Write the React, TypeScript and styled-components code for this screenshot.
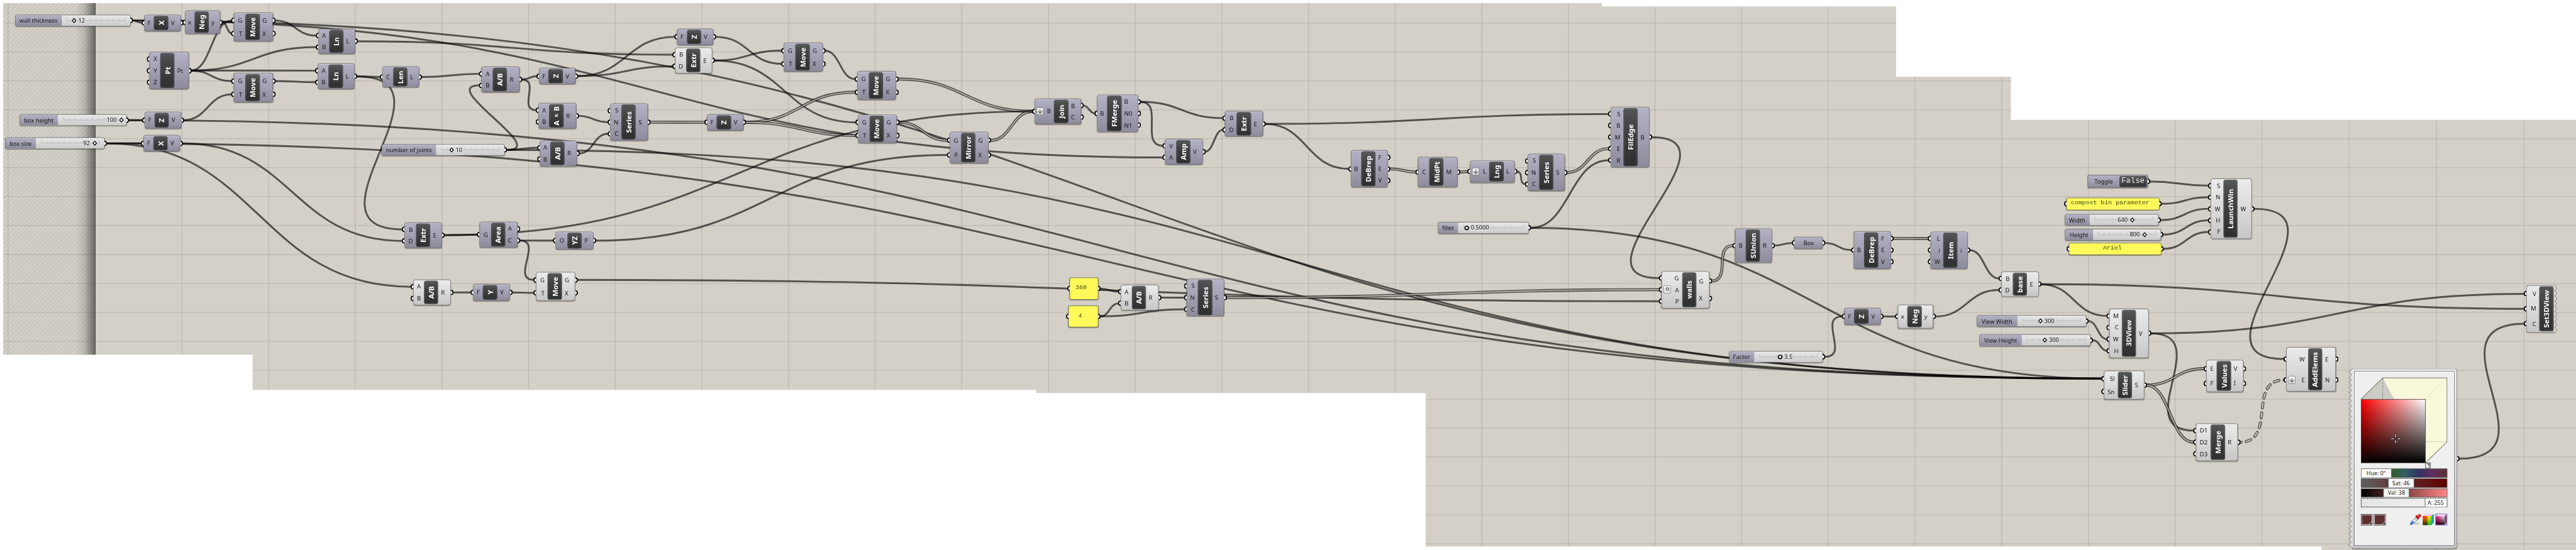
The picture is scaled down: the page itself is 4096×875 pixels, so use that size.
import React from "react";
import styled, { createGlobalStyle, css } from "styled-components";
import { ArrowDown } from "lucide-react";

const GlobalStyle = createGlobalStyle`
  html, body { margin: 0; padding: 0; background: #fff; overflow: hidden; }
  *, *::before, *::after { box-sizing: border-box; }
`;

const SANS = `"Noto Sans", "Open Sans", sans-serif`;
const MONO = `"Liberation Mono", monospace`;
const BOARD_W = 6445;
const BOARD_H = 1377;
const SCALE = 4096 / BOARD_W;

type Tone = "violet" | "light";

/* ---------- canvas ---------- */

const Viewport = styled.main`
  width: 4096px;
  height: 875px;
  overflow: hidden;
  background: #fff;
`;

const Board = styled.div`
  position: relative;
  width: ${BOARD_W}px;
  height: ${BOARD_H}px;
  transform: scale(${SCALE});
  transform-origin: 0 0;
  font-family: ${SANS};
  color: #131313;
`;

const Sheet = styled.div`
  position: absolute;
  inset: 0;
  background: #d4d0c8;
  clip-path: polygon(
    8px 8px, 4008px 8px, 4008px 16px, 4744px 16px, 4744px 192px, 5031px 192px, 5031px 300px,
    6445px 300px, 6445px 1377px, 5808px 1377px, 5808px 1368px, 3567px 1368px, 3567px 984px,
    2592px 984px, 2592px 976px, 632px 976px, 632px 888px, 8px 888px
  );
`;

const Margin = styled.div`
  width: 238.5px;
  height: 100%;
  border-right: 2px solid #3a3936;
  background:
    linear-gradient(to right, transparent 190px, rgba(0, 0, 0, 0.12) 212px, rgba(0, 0, 0, 0.5) 238px),
    repeating-linear-gradient(135deg, #d4d0c8 0 4px, #c8c4bb 4.8px 7.2px, #d4d0c8 8px);
`;

const Layer = styled.svg`
  position: absolute;
  inset: 0;
  display: block;
`;

/* ---------- shared parts ---------- */

const toneFill = {
  violet: css`
    background: linear-gradient(#b3b1c3, #a3a1b3 45%, #8d8a9b);
    border-color: #4b4a52;
  `,
  light: css`
    background: linear-gradient(#ebebeb, #dadada 50%, #c6c6c6);
    border-color: #585858;
  `,
};

const Placed = styled.div<{ $x: number; $y: number; $w: number; $h: number }>`
  position: absolute;
  left: ${(p) => p.$x}px;
  top: ${(p) => p.$y}px;
  width: ${(p) => p.$w}px;
  height: ${(p) => p.$h}px;
`;

const Grip = styled.i<{ $side: "in" | "out" }>`
  position: absolute;
  top: 50%;
  width: 7px;
  height: 14px;
  margin-top: -7px;
  background: #fff;
  border: 3px solid #000;
  ${(p) =>
    p.$side === "in"
      ? css`
          left: -7px;
          border-right: 0;
          border-radius: 7px 0 0 7px;
        `
      : css`
          right: -7px;
          border-left: 0;
          border-radius: 0 7px 7px 0;
        `}
`;

/* ---------- component node ---------- */

const NodeBox = styled(Placed)<{ $cols: string }>`
  display: grid;
  grid-template-columns: ${(p) => p.$cols};
  padding: 3px 0;
`;

const NodeSkin = styled.div<{ $tone: Tone; $jagged?: boolean }>`
  position: absolute;
  inset: 0;
  border: 1.6px solid;
  border-radius: 6px;
  ${(p) => toneFill[p.$tone]}
  box-shadow: inset 0 1.5px 0 rgba(255, 255, 255, 0.55), inset 1px 0 0 rgba(255, 255, 255, 0.25),
    0 1px 2px rgba(0, 0, 0, 0.35);
  ${(p) => p.$jagged && css`border-right: 0; border-radius: 6px 0 0 6px;`}
`;

const Column = styled.div`
  position: relative;
  display: flex;
  flex-direction: column;
  min-width: 0;
`;

const Param = styled.div<{ $side: "in" | "out" }>`
  position: relative;
  flex: 1;
  display: flex;
  align-items: center;
  justify-content: ${(p) => (p.$side === "in" ? "flex-end" : "flex-start")};
  gap: 8px;
  padding: ${(p) => (p.$side === "in" ? "0 8px 0 0" : "0 0 0 7px")};
  font-size: 15px;
  line-height: 1;
  white-space: nowrap;
`;

const Title = styled.div`
  position: relative;
  display: flex;
  align-items: center;
  justify-content: center;
  border: 1.6px solid #060606;
  border-radius: 5px;
  background: linear-gradient(#555, #444 30%, #2f2f2f);
  box-shadow: inset 0 0 0 1px rgba(255, 255, 255, 0.22);
  color: #fff;
`;

const TitleText = styled.span`
  writing-mode: vertical-rl;
  transform: rotate(180deg);
  font-size: 18px;
  font-weight: 700;
  line-height: 1;
  white-space: nowrap;
`;

const Modifier = styled.span`
  width: 18.5px;
  height: 19.5px;
  margin-right: auto;
  margin-left: 4.5px;
  display: flex;
  align-items: center;
  justify-content: center;
  border: 1.3px solid #6a6a6a;
  border-radius: 3px;
  background: linear-gradient(#fff, #d8d8d8);
  color: #555;
`;

interface Comp {
  x0: number; x1: number; y0: number; y1: number; t: number;
  name: string; ins: string[]; outs: string[];
  tone?: Tone; mod?: { row: number; kind: "down" | "dot" }; jagged?: boolean;
}

const c = (
  x0: number, x1: number, y0: number, y1: number, t: number,
  name: string, ins: string, outs: string, extra: Partial<Comp> = {}
): Comp => ({ x0, x1, y0, y1, t, name, ins: ins.split(" ").filter(Boolean), outs: outs.split(" ").filter(Boolean), ...extra });

const L = { tone: "light" as Tone };

const comps: Record<string, Comp> = {
  x1: c(361.2, 452.7, 36.7, 77.7, 385.3, "X", "F", "V"),
  neg1: c(462.5, 551, 26, 85, 486.6, "Neg", "x", "y"),
  move1: c(585.3, 682.6, 32, 103.3, 614.3, "Move", "G T", "G X"),
  pt: c(373.7, 472.8, 130, 223.3, 401, "Pt", "X Y Z", "Pt"),
  move2: c(585.3, 682.6, 183.3, 255.7, 614.3, "Move", "G T", "G X"),
  z1: c(362, 454, 280.3, 321.7, 386.6, "Z", "F", "V"),
  x2: c(359.4, 451, 338.3, 379.3, 384, "X", "F", "V"),
  ln1: c(796.5, 888.5, 71.7, 135.3, 823.8, "Ln", "A B", "L"),
  ln2: c(795.2, 886.7, 159.3, 223.3, 822.4, "Ln", "A B", "L"),
  len: c(956.8, 1048.8, 166.3, 219.3, 984, "Len", "C", "L"),
  div1: c(1205.4, 1300, 167.3, 231, 1233, "A/B", "A B", "R"),
  z2: c(1348.8, 1440.4, 170, 211, 1372.5, "Z", "F", "V"),
  mul: c(1347.4, 1441.7, 258.3, 322, 1374.3, "A×B", "A B", "R"),
  div2: c(1350.5, 1444, 352.3, 415.7, 1377, "A/B", "A B", "R"),
  series1: c(1526.5, 1620.7, 259.3, 352.3, 1555, "Series", "S N C", "S"),
  z3: c(1694, 1785.4, 71.7, 112.7, 1718.5, "Z", "F", "V"),
  extr1: c(1688.6, 1782.3, 119.3, 183.7, 1717, "Extr", "B D", "E", L),
  z4: c(1769.4, 1860.4, 285.7, 326.7, 1793.5, "Z", "F", "V"),
  move3: c(1961.3, 2058.7, 107.3, 179.3, 1990.4, "Move", "G T", "G X"),
  move4: c(2144.7, 2242, 178.3, 250.3, 2173.8, "Move", "G T", "G X"),
  move5: c(2146.6, 2243.6, 287, 358.3, 2175.7, "Move", "G T", "G X"),
  mirror: c(2376, 2473.3, 330, 409, 2405, "Mirror", "G P", "G X"),
  join: c(2589, 2705, 246.7, 310.7, 2637.2, "Join", "B", "B C", { mod: { row: 0, kind: "down" } }),
  fmerge: c(2744.8, 2848, 237.3, 331, 2770.3, "FMerge", "B", "B N0 N1"),
  amp: c(2915.4, 3009.6, 347.7, 411.7, 2942.6, "Amp", "V A", "V"),
  extr2: c(3065.4, 3159.6, 278, 342.3, 3094.4, "Extr", "B D", "E"),
  debrep1: c(3379.5, 3472.2, 376.3, 469.3, 3405.8, "DeBrep", "B", "F E V"),
  midpt: c(3548.4, 3647.2, 393.3, 468, 3575.9, "MidPt", "C", "M"),
  lng: c(3678.4, 3789.8, 402.3, 456.7, 3726.2, "Lng", "L", "L", { mod: { row: 0, kind: "down" } }),
  series2: c(3821.6, 3915.4, 385, 478.3, 3850.7, "Series", "S N C", "S"),
  filedge: c(4029.5, 4126.6, 268, 418.7, 4061.9, "FilEdge", "S B M E R", "B"),
  extr3: c(1012, 1106.4, 556.7, 620.7, 1041, "Extr", "B D", "E"),
  area: c(1199.7, 1295.4, 555.3, 619.7, 1228.6, "Area", "G", "A C"),
  yz: c(1390.3, 1485.2, 580, 624.7, 1419.6, "YZ", "O", "P"),
  div3: c(1033.6, 1128, 700.3, 764.3, 1061, "A/B", "A B", "R", L),
  y1: c(1183.5, 1275.6, 711.3, 752.7, 1208.4, "Y", "F", "V"),
  move6: c(1341.3, 1439, 681.3, 752.7, 1370.5, "Move", "G T", "G X", L),
  div4: c(2804, 2898.5, 712.7, 777, 2831.5, "A/B", "A B", "R", L),
  series3: c(2969, 3063.4, 698.3, 791.7, 2997.2, "Series", "S N C", "S"),
  walls: c(4157, 4276.8, 678.7, 771.7, 4208.5, "walls", "G A P", "G X", { tone: "light", mod: { row: 1, kind: "dot" } }),
  sunion: c(4341.3, 4434.3, 571.7, 657.7, 4368, "SUnion", "B", "R"),
  debrep2: c(4638, 4730.5, 579.3, 672.7, 4664, "DeBrep", "B", "F E V"),
  z5: c(4614.7, 4706.3, 771.3, 812.7, 4639.4, "Z", "F", "V"),
  neg2: c(4747.5, 4836.6, 763, 821.7, 4772.2, "Neg", "x", "y", L),
  item: c(4830.4, 4923.4, 579.7, 672.7, 4862, "Item", "L i W", "i"),
  base: c(5006.7, 5100.8, 679.7, 743.3, 5036, "base", "B D", "E", L),
  launch: c(5530.8, 5634, 447.3, 598, 5563, "LaunchWin", "S N W H F", "W", L),
  view3d: c(5277, 5376.3, 773.3, 895.7, 5308.6, "3DView", "M C W H", "V", L),
  slider: c(5263.8, 5364.7, 928.3, 999.7, 5298.7, "Slider", "Sl Sn", "S", L),
  values: c(5520, 5613.4, 901.3, 981.3, 5546.4, "Values", "E F", "V I", L),
  merge: c(5494, 5598.7, 1060.3, 1153.7, 5531.3, "Merge", "D1 D2 D3", "R", L),
  addelems: c(5720, 5843.8, 869.3, 980.3, 5774.6, "AddElems", "W E", "E N", { tone: "light", mod: { row: 1, kind: "down" } }),
  set3d: c(6321, 6392, 713.8, 832, 6353.4, "Set3DView", "V M C", "", { tone: "light", jagged: true }),
};

const zigzag = (x: number, y0: number, y1: number, step: number, depth: number) => {
  const pts: string[] = [];
  const n = Math.round((y1 - y0) / step);
  const s = (y1 - y0) / n;
  for (let i = 0; i <= n; i++) {
    pts.push(`${x},${y0 + i * s}`);
    if (i < n) pts.push(`${x + depth},${y0 + (i + 0.5) * s}`);
  }
  return pts.join(" ");
};

const TornEdge = styled.svg<{ $side: "left" | "right" }>`
  position: absolute;
  top: 0;
  ${(p) => (p.$side === "left" ? "left: -7px;" : "right: -6px;")}
  overflow: visible;
`;

function Component({ d }: { d: Comp }) {
  const tone = d.tone ?? "violet";
  const h = d.y1 - d.y0;
  const cols = `${d.t - d.x0}px 35.4px 1fr`;
  return (
    <NodeBox $x={d.x0} $y={d.y0} $w={d.x1 - d.x0} $h={h} $cols={cols}>
      <NodeSkin $tone={tone} $jagged={d.jagged} />
      {d.jagged && (
        <TornEdge $side="right" width="8" height={h}>
          <polygon points={`0,0.8 ${zigzag(2, 0.8, h - 0.8, 13, 5)} 0,${h - 0.8}`} fill="#dcdcdc" />
          <polyline points={zigzag(2, 0.8, h - 0.8, 13, 5)} fill="none" stroke="#6a6a6a" strokeWidth="1.4" />
        </TornEdge>
      )}
      <Column>
        {d.ins.map((s, i) => (
          <Param key={i} $side="in">
            <Grip $side="in" />
            {d.mod?.row === i && (
              <Modifier>
                {d.mod.kind === "down" ? (
                  <ArrowDown size={17} strokeWidth={2.6} />
                ) : (
                  <svg width="12" height="14" viewBox="0 0 12 14">
                    <circle cx="7" cy="5.5" r="3.4" fill="#ddd" stroke="#666" strokeWidth="2" />
                  </svg>
                )}
              </Modifier>
            )}
            {s}
          </Param>
        ))}
      </Column>
      <Title>
        <TitleText>{d.name}</TitleText>
      </Title>
      <Column>
        {d.outs.map((s, i) => (
          <Param key={i} $side="out">
            <Grip $side="out" />
            {s}
          </Param>
        ))}
      </Column>
    </NodeBox>
  );
}

/* ---------- number sliders ---------- */

interface Num {
  x0: number; x1: number; y: number; split: number; knob: number;
  label: string; value: string; side: "left" | "right"; round?: boolean;
}

const n = (x0: number, x1: number, y: number, split: number, knob: number, label: string, value: string, side: "left" | "right", round = false): Num =>
  ({ x0, x1, y, split, knob, label, value, side, round });

const sliders: Record<string, Num> = {
  wall: n(38.4, 326.8, 36.7, 153, 184.4, "wall thickness", "12", "right"),
  height: n(49.6, 317.4, 286.3, 143.8, 302.7, "box height", "100", "left"),
  size: n(13.4, 262.5, 344.3, 88.8, 236, "box size", "92", "left"),
  joints: n(955.4, 1263.5, 360.7, 1089.8, 1128.7, "number of joints", "10", "right"),
  fillet: n(3597.8, 3825, 555.7, 3647, 3668.6, "fillet", "0.5000", "right", true),
  factor: n(4326, 4561, 878.7, 4388, 4452.8, "Factor", "3.5", "right", true),
  winW: n(5166, 5400.5, 536.3, 5227, 5334, "Width", "640", "left"),
  winH: n(5167.4, 5407.3, 572.7, 5234.6, 5364.3, "Height", "800", "left"),
  viewW: n(4945.8, 5219.6, 789.3, 5045.7, 5103.7, "View Width", "300", "right"),
  viewH: n(4952.7, 5231, 837, 5057, 5115, "View Height", "300", "right"),
};

const SLIDER_H = 29.2;

const SliderBox = styled(Placed)`
  display: flex;
  border: 1.6px solid #4b4a50;
  border-radius: 5px;
  background: linear-gradient(#e9e9e9, #d9d9d9 50%, #cbcbcb);
  box-shadow: 0 1px 2px rgba(0, 0, 0, 0.35), inset 0 1.5px 0 rgba(255, 255, 255, 0.7);
`;

const SliderLabel = styled.div<{ $w: number }>`
  width: ${(p) => p.$w}px;
  display: flex;
  align-items: center;
  justify-content: center;
  border-right: 1.6px solid #3c3c42;
  border-radius: 4px 0 0 4px;
  background: linear-gradient(#b3b1c3, #a3a1b3 45%, #8d8a9b);
  font-size: 14.7px;
  line-height: 1;
  white-space: nowrap;
`;

const Track = styled.div`
  position: relative;
  flex: 1;
`;

const TickSvg = styled.svg`
  position: absolute;
  left: 0;
  top: 0;
  overflow: visible;
`;

const Value = styled.span<{ $edge: number; $side: "left" | "right" }>`
  position: absolute;
  top: 5px;
  ${(p) => (p.$side === "right" ? "left" : "right")}: ${(p) => p.$edge}px;
  padding: 0 1px;
  background: #dadada;
  font-size: 14.4px;
  line-height: 16px;
`;

function NumberSlider({ d }: { d: Num }) {
  const tw = d.x1 - d.split;
  const k = d.knob - d.split;
  const a = 13.5;
  const b = tw - 15;
  return (
    <SliderBox $x={d.x0} $y={d.y} $w={d.x1 - d.x0} $h={SLIDER_H}>
      <SliderLabel $w={d.split - d.x0}>{d.label}</SliderLabel>
      <Track>
        <TickSvg width={tw} height="26">
          <g stroke="#b3b3b3" strokeWidth="1.2">
            <line x1={a} x2={b} y1="13.6" y2="13.6" />
            {Array.from({ length: 11 }, (_, i) => {
              const x = a + ((b - a) * i) / 10;
              return <line key={i} x1={x} x2={x} y1={i % 5 === 0 ? 5.5 : 8.5} y2="13.6" />;
            })}
          </g>
        </TickSvg>
        <Value $side={d.side} $edge={d.side === "right" ? k + 9.5 : tw - k + 9}>{d.value}</Value>
        <TickSvg width={tw} height="26">
          {d.round ? (
            <circle cx={k} cy="13.4" r="4.4" fill="#fff" stroke="#000" strokeWidth="2.6" />
          ) : (
            <path d={`M${k} 8.4l4.4 5-4.4 5-4.4-5z`} fill="#fff" stroke="#000" strokeWidth="2" />
          )}
        </TickSvg>
        <Grip $side="out" />
      </Track>
    </SliderBox>
  );
}

/* ---------- panels, toggle, plain parameter ---------- */

interface PanelData { x0: number; x1: number; y0: number; y1: number; text: string; shift: number }

const panels: Record<string, PanelData> = {
  p360: { x0: 2675.8, x1: 2748, y0: 695.3, y1: 749.7, text: "360", shift: 7 },
  p4: { x0: 2672.7, x1: 2748, y0: 764.7, y1: 819, text: "4", shift: 8 },
  title: { x0: 5170, x1: 5402.8, y0: 494.7, y1: 525.7, text: "compost bin parameter", shift: 7 },
  font: { x0: 5176, x1: 5408, y0: 607.7, y1: 638, text: "Ariel", shift: 7 },
};

const PanelBox = styled(Placed)<{ $shift: number }>`
  display: flex;
  align-items: center;
  justify-content: center;
  padding: 0 ${(p) => 2 * p.$shift}px 3px 0;
  border: 1.6px solid #5d5b33;
  border-radius: 5px;
  background: #fffa5a;
  box-shadow: 0 1px 2px rgba(0, 0, 0, 0.35);
  color: #3c4a10;
  font-family: ${MONO};
  font-size: 15.6px;
  line-height: 1;
  white-space: nowrap;
`;

const ToggleBox = styled(Placed)`
  display: flex;
  align-items: center;
  border: 1.6px solid;
  border-radius: 5px;
  padding: 0 2px 0 0;
  ${toneFill.violet}
  box-shadow: 0 1px 2px rgba(0, 0, 0, 0.35);
`;

const ToggleLabel = styled.span`
  flex: 1;
  text-align: center;
  font-size: 14.7px;
  line-height: 1;
`;

const ToggleState = styled.span`
  width: 68px;
  height: 27px;
  display: flex;
  align-items: flex-start;
  justify-content: center;
  border: 1.6px solid #0a0a0a;
  border-radius: 4px;
  background: linear-gradient(#555, #333);
  box-shadow: inset 0 0 0 1px rgba(255, 255, 255, 0.25);
  color: #f0f0f0;
  font-family: ${MONO};
  font-size: 19.2px;
  line-height: 22px;
`;

const ParamBox = styled(Placed)`
  display: flex;
  align-items: center;
  justify-content: center;
  border: 1.6px solid;
  border-radius: 5px;
  ${toneFill.violet}
  box-shadow: inset 0 1.5px 0 rgba(255, 255, 255, 0.4), 0 1px 2px rgba(0, 0, 0, 0.35);
  font-size: 14.7px;
  line-height: 1;
`;

/* ---------- colour picker ---------- */

const PickerBox = styled(Placed)`
  padding: 5px 5px 6px;
  border: 1.6px solid #666;
  border-left: 0;
  border-radius: 0 6px 6px 0;
  background: linear-gradient(#f0f0f0, #c4c4c8);
  box-shadow: 0 1px 2px rgba(0, 0, 0, 0.4);
`;

const PickerBody = styled.div`
  width: 100%;
  height: 100%;
  padding: 15px 17px 0 15.5px;
  border: 1.6px solid #444;
  background: #efefef;
  box-shadow: inset 0 0 0 1.6px #fff;
  display: flex;
  flex-direction: column;
`;

const CubeArea = styled.div`
  position: relative;
  width: 216px;
  height: 228px;
`;

const ShadeSquare = styled.div`
  position: absolute;
  left: 0;
  top: 53.5px;
  width: 162px;
  height: 160px;
  border: 1.4px solid #1a0000;
  background: linear-gradient(to top, #000, transparent), linear-gradient(to right, #f00, #fff);
`;

const Bars = styled.div`
  display: flex;
  flex-direction: column;
  gap: 2.2px;
`;

const Bar = styled.div<{ $fill: string; $lead: number }>`
  height: 22.5px;
  width: 216px;
  display: flex;
  padding-left: ${(p) => p.$lead}px;
  border: 1.5px solid #151515;
  background: ${(p) => p.$fill};
`;

const BarValue = styled.span<{ $w: number; $at: "start" | "mid" | "end" }>`
  width: ${(p) => p.$w}px;
  display: flex;
  align-items: center;
  justify-content: center;
  background: #fff;
  border: solid #151515;
  border-width: ${(p) => ({ start: "0 1.5px 0 0", mid: "0 1.5px", end: "0 0 0 1.5px" }[p.$at])};
  font-size: 14px;
  line-height: 1;
  white-space: nowrap;
`;

const Tools = styled.div`
  display: flex;
  align-items: center;
  margin-top: 16.5px;
  gap: 3px;
  width: 216px;
`;

const Gap = styled.span`
  flex: 1;
`;

const Swatch = styled.span`
  width: 29.5px;
  height: 28.5px;
  border: 1.6px solid #050505;
  background: linear-gradient(135deg, #5e2e2f 80%, #fff 80% 85%, #000 85%);
  box-shadow: inset 0 0 0 1.4px #fff;
`;

function ColourPicker() {
  return (
    <PickerBox $x={5885} $y={923.4} $w={262} $h={449.6}>
      <TornEdge $side="left" width="8" height="449">
        <polygon points={`8,0.8 ${zigzag(5, 0.8, 446, 13, -5)} 8,446`} fill="#e2e2e2" />
        <polyline points={`8,0 ${zigzag(5, 0.8, 446, 13, -5)} 8,447`} fill="none" stroke="#6a6a6a" strokeWidth="1.4" />
      </TornEdge>
      <PickerBody>
        <CubeArea>
          <svg width="216" height="228" viewBox="0 0 216 228">
            <polygon points="0.5,54 54.5,0.7 215.5,0.7 215.5,161 162,213 162,54" fill="#f9f8db" />
            <polygon points="0.5,54 54.5,0.7 83,54" fill="#cdcdc5" />
            <line x1="162" y1="54" x2="215" y2="1" stroke="#d8d7c0" strokeWidth="1.2" />
            <line x1="54.5" y1="2" x2="54.5" y2="54" stroke="#777" strokeWidth="1.6" strokeDasharray="3 2.6" />
            <line x1="162" y1="160.5" x2="215" y2="160.5" stroke="#b4b39d" strokeWidth="1.6" strokeDasharray="3 2.6" />
            <polyline points="0.5,54 54.5,0.7 215.5,0.7 215.5,161 162,213" fill="none" stroke="#222" strokeWidth="1.3" />
            <rect x="161.5" y="213.5" width="12.5" height="12.5" fill="#fff" stroke="#222" strokeWidth="1.2" />
            <polygon points="162,214 174,214 174,226" fill="#888" />
          </svg>
          <ShadeSquare>
            <svg width="159" height="157" viewBox="0 0 159 157">
              <g stroke="#111" strokeWidth="4.2" strokeLinecap="round">
                <path d="M86 88v5M86 103v5M75.5 98h5M92 98h5" />
              </g>
              <g stroke="#fff" strokeWidth="2" strokeLinecap="round">
                <path d="M86 88v5M86 103v5M75.5 98h5M92 98h5" />
              </g>
            </svg>
          </ShadeSquare>
        </CubeArea>
        <Bars>
          <Bar $lead={0} $fill="linear-gradient(to right,#5f2f2f,#5f5f30 20%,#2f5f33 38%,#305f62 50%,#333363 67%,#5f3062 82%,#602f33)">
            <BarValue $w={76} $at="start">Hue: 0°</BarValue>
          </Bar>
          <Bar $lead={67} $fill="linear-gradient(to right,#606060,#603636 40%,#600000)">
            <BarValue $w={65} $at="mid">Sat: 46</BarValue>
          </Bar>
          <Bar $lead={55.5} $fill="linear-gradient(to right,#000,#602f2f 38%,#ff8585)">
            <BarValue $w={65} $at="mid">Val: 38</BarValue>
          </Bar>
          <Bar $lead={159} $fill="linear-gradient(to right,rgba(240,240,240,.1),#efefef 75%), repeating-conic-gradient(#c8c8c8 0 25%,#fff 0 50%) 0 0/8px 8px">
            <BarValue $w={54} $at="end">A: 255</BarValue>
          </Bar>
        </Bars>
        <Tools>
          <Swatch />
          <Swatch />
          <Gap />
          <svg width="29" height="29" viewBox="0 0 29 29">
            <defs>
              <linearGradient id="tube" x1="0" y1="1" x2="1" y2="0">
                <stop offset="0" stopColor="#0a50e0" />
                <stop offset="0.4" stopColor="#58a0ff" />
                <stop offset="0.5" stopColor="#f2f6fa" />
                <stop offset="1" stopColor="#9aa6b2" />
              </linearGradient>
            </defs>
            <ellipse cx="17" cy="25" rx="9" ry="2.5" fill="#c9c9c9" />
            <path d="M1 28l3-8 12-11 5 5-12 11z" fill="url(#tube)" stroke="#445" strokeWidth="1" />
            <path d="M14 7l7 8 2-3 5-6c1-3-1-6-5-5l-5 3-2 0z" fill="#cc2418" />
            <path d="M20 5l4-3" stroke="#ff9a88" strokeWidth="1.6" />
          </svg>
          <svg width="29" height="29" viewBox="0 0 29 29">
            <defs>
              <linearGradient id="rg" x1="0" y1="0" x2="1" y2="1">
                <stop offset="0" stopColor="#ff1010" />
                <stop offset="0.5" stopColor="#b58a00" />
                <stop offset="1" stopColor="#00a010" />
              </linearGradient>
              <linearGradient id="yt" x1="0" y1="0" x2="0" y2="1">
                <stop offset="0" stopColor="#ffff20" />
                <stop offset="1" stopColor="#10c030" />
              </linearGradient>
              <linearGradient id="dk" x1="0" y1="0" x2="0" y2="1">
                <stop offset="0.3" stopColor="#000" stopOpacity="0" />
                <stop offset="1" stopColor="#000" stopOpacity="0.75" />
              </linearGradient>
            </defs>
            <polygon points="1,6 6,0.5 28.5,0.5 22,6" fill="#f7c8e6" />
            <polygon points="22,6 28.5,0.5 28.5,22 22,28.5" fill="#18a8a8" />
            <rect x="0.5" y="6" width="21.5" height="22.5" fill="url(#rg)" />
            <rect x="12" y="6" width="10" height="22.5" fill="url(#yt)" opacity="0.75" />
            <rect x="0.5" y="6" width="12" height="22.5" fill="url(#dk)" />
          </svg>
          <svg width="30" height="29" viewBox="0 0 30 29">
            <defs>
              <linearGradient id="pk" x1="0" y1="0" x2="1" y2="0">
                <stop offset="0" stopColor="#e0107a" />
                <stop offset="1" stopColor="#ffe8f4" />
              </linearGradient>
              <linearGradient id="pd" x1="0" y1="0" x2="0" y2="1">
                <stop offset="0" stopColor="#20000f" stopOpacity="0" />
                <stop offset="1" stopColor="#20000f" />
              </linearGradient>
            </defs>
            <rect x="0.8" y="0.8" width="28.4" height="27.4" fill="#c8c8f4" stroke="#4040b0" strokeWidth="1.5" />
            <polygon points="1.5,6 7,1.5 28.5,1.5 23,6" fill="#fbd6ec" />
            <polygon points="23,6 28.5,1.5 28.5,22 23,27.5" fill="#7a5068" />
            <rect x="1.5" y="6" width="21.5" height="21.5" fill="url(#pk)" />
            <rect x="1.5" y="6" width="21.5" height="21.5" fill="url(#pd)" />
          </svg>
        </Tools>
      </PickerBody>
    </PickerBox>
  );
}

/* ---------- wires ---------- */

type Kind = "one" | "list" | "tree";
type Pt = [number, number];

const rowY = (d: Comp, count: number, i: number) => d.y0 + 3 + ((i + 0.5) * (d.y1 - d.y0 - 6)) / count;

const outPoint = (id: string, i: number): Pt => {
  if (comps[id]) return [comps[id].x1 + 5, rowY(comps[id], comps[id].outs.length, i)];
  if (sliders[id]) return [sliders[id].x1 + 5, sliders[id].y + SLIDER_H / 2];
  if (panels[id]) return [panels[id].x1 + 5, (panels[id].y0 + panels[id].y1) / 2];
  if (id === "toggle") return [5378, 454.3];
  if (id === "box") return [4566, 608.3];
  return [6152, 1148.3];
};

const inPoint = (id: string, i: number): Pt =>
  id === "box" ? [4484, 608.3] : [comps[id].x0 - 5, rowY(comps[id], comps[id].ins.length, i)];

const links: [string, number, string, number, Kind?][] = [
  ["wall", 0, "x1", 0], ["wall", 0, "slider", 0], ["wall", 0, "amp", 1],
  ["x1", 0, "neg1", 0], ["neg1", 0, "move1", 1], ["pt", 0, "move1", 0],
  ["pt", 0, "ln1", 1], ["pt", 0, "ln2", 0], ["pt", 0, "move2", 0],
  ["height", 0, "z1", 0], ["height", 0, "slider", 0], ["z1", 0, "move2", 1],
  ["size", 0, "x2", 0], ["size", 0, "slider", 0], ["size", 0, "div3", 0],
  ["x2", 0, "extr3", 1], ["move1", 0, "ln1", 0], ["move2", 0, "ln2", 1],
  ["ln1", 0, "extr1", 0], ["ln2", 0, "len", 0], ["ln2", 0, "extr3", 0],
  ["len", 0, "div1", 0], ["joints", 0, "div1", 1], ["joints", 0, "div2", 0],
  ["joints", 0, "slider", 0], ["div1", 0, "z2", 0], ["div1", 0, "mul", 0],
  ["z2", 0, "z3", 0], ["z2", 0, "extr1", 1], ["z3", 0, "move3", 1],
  ["extr1", 0, "move3", 0], ["extr1", 0, "move5", 0],
  ["mul", 0, "series1", 1], ["div2", 0, "series1", 2], ["series1", 0, "z4", 0, "list"],
  ["z4", 0, "move4", 1, "list"], ["z4", 0, "move5", 1, "list"], ["move3", 0, "move4", 0],
  ["move4", 0, "join", 0, "list"], ["move5", 0, "mirror", 0, "list"], ["mirror", 0, "join", 0, "list"],
  ["extr3", 0, "area", 0], ["extr3", 0, "join", 0], ["area", 1, "yz", 0], ["area", 1, "move6", 0],
  ["yz", 0, "mirror", 1], ["div3", 0, "y1", 0], ["y1", 0, "move6", 1], ["move6", 0, "walls", 2],
  ["join", 0, "fmerge", 0], ["fmerge", 0, "extr2", 0], ["fmerge", 0, "amp", 0], ["amp", 0, "extr2", 1],
  ["extr2", 0, "filedge", 0], ["extr2", 0, "debrep1", 0], ["debrep1", 1, "midpt", 0, "list"],
  ["midpt", 0, "lng", 0, "list"], ["lng", 0, "series2", 2], ["series2", 0, "filedge", 3, "list"],
  ["fillet", 0, "filedge", 4], ["fillet", 0, "slider", 0], ["filedge", 0, "walls", 0],
  ["p360", 0, "div4", 0], ["p4", 0, "div4", 1], ["p4", 0, "series3", 2],
  ["div4", 0, "series3", 1], ["series3", 0, "walls", 1, "list"],
  ["walls", 0, "sunion", 0, "list"], ["sunion", 0, "box", 0], ["box", 0, "debrep2", 0],
  ["debrep2", 0, "item", 0, "list"], ["factor", 0, "z5", 0], ["z5", 0, "neg2", 0],
  ["neg2", 0, "base", 1], ["item", 0, "base", 0], ["base", 0, "view3d", 0], ["base", 0, "set3d", 1],
  ["viewW", 0, "view3d", 2], ["viewH", 0, "view3d", 3], ["view3d", 0, "set3d", 0], ["view3d", 0, "merge", 0],
  ["toggle", 0, "launch", 0], ["title", 0, "launch", 1], ["winW", 0, "launch", 2],
  ["winH", 0, "launch", 3], ["font", 0, "launch", 4], ["launch", 0, "addelems", 0],
  ["slider", 0, "values", 0, "list"], ["slider", 0, "merge", 1, "list"],
  ["merge", 0, "addelems", 1, "tree"], ["picker", 0, "set3d", 2],
];

/* Handle length grows with distance once a wire is steep or runs backwards. */
const wirePath = ([ax, ay]: Pt, [bx, by]: Pt) => {
  const dx = bx - ax;
  const dy = Math.abs(by - ay);
  const dist = Math.hypot(dx, dy);
  let h = dx / 2;
  if (dx <= 0 || dy / dx > 1.35) {
    const k = dx > 0 && dy / dx < 2 ? 0.49 : dist < 150 ? 0.57 : dist < 300 ? 0.62 : 0.68;
    h = dist * k;
  }
  return `M${ax} ${ay}C${ax + h} ${ay} ${bx - h} ${by} ${bx} ${by}`;
};

const WIRE = "rgba(0,0,0,0.61)";

function Wire({ d, kind }: { d: string; kind: Kind }) {
  if (kind === "one") return <path d={d} stroke={WIRE} strokeWidth="4.6" />;
  if (kind === "list")
    return (
      <>
        <path d={d} stroke={WIRE} strokeWidth="7.6" />
        <path d={d} stroke="#bab7af" strokeWidth="2.5" />
      </>
    );
  return (
    <>
      <path d={d} stroke="#53524e" strokeWidth="7.4" strokeLinecap="round" strokeDasharray="12.5 12.5" strokeDashoffset="9" />
      <path d={d} stroke="#d4d0c8" strokeWidth="2.8" strokeLinecap="round" strokeDasharray="12.5 12.5" strokeDashoffset="9" />
    </>
  );
}

const gridX = [20.5, 455, 672, 889, 1106, 1322.5, 1539, 1756, 1973, 2189.5, 2406, 2623.5, 2840, 3057, 3274, 3491, 3707.5, 3924, 4140.5, 4357, 4574, 4791, 5008, 5225, 5442, 5659, 5877, 6096, 6315];
const gridY = Array.from({ length: 19 }, (_, i) => 57.7 + i * 72.42);

export default function App() {
  return (
    <>
      <GlobalStyle />
      <Viewport>
        <Board>
          <Sheet>
            <Margin />
            <Layer width={BOARD_W} height={BOARD_H}>
              <g stroke="rgba(70,70,50,0.2)" strokeWidth="1.6">
                {gridX.map((x) => <line key={x} x1={x} x2={x} y1="0" y2={BOARD_H} />)}
                {gridY.map((y) => <line key={y} y1={y} y2={y} x1="0" x2={BOARD_W} />)}
              </g>
            </Layer>
          </Sheet>
          <Layer width={BOARD_W} height={BOARD_H} fill="none">
            {links.map(([a, i, b, j, kind = "one"]) => (
              <Wire key={`${a}${i}${b}${j}`} d={wirePath(outPoint(a, i), inPoint(b, j))} kind={kind} />
            ))}
          </Layer>
          {Object.entries(comps).map(([id, d]) => <Component key={id} d={d} />)}
          {Object.entries(sliders).map(([id, d]) => <NumberSlider key={id} d={d} />)}
          {Object.entries(panels).map(([id, d]) => (
            <PanelBox key={id} $x={d.x0} $y={d.y0} $w={d.x1 - d.x0} $h={d.y1 - d.y0} $shift={d.shift}>
              <Grip $side="in" />
              {d.text}
              <Grip $side="out" />
            </PanelBox>
          ))}
          <ToggleBox $x={5222.5} $y={438.3} $w={151} $h={32}>
            <ToggleLabel>Toggle</ToggleLabel>
            <ToggleState>False</ToggleState>
            <Grip $side="out" />
          </ToggleBox>
          <ParamBox $x={4489} $y={593.3} $w={72.3} $h={30}>
            <Grip $side="in" />
            Box
            <Grip $side="out" />
          </ParamBox>
          <ColourPicker />
          <Placed $x={6146} $y={1141.3} $w={1} $h={14}>
            <Grip $side="out" />
          </Placed>
        </Board>
      </Viewport>
    </>
  );
}
